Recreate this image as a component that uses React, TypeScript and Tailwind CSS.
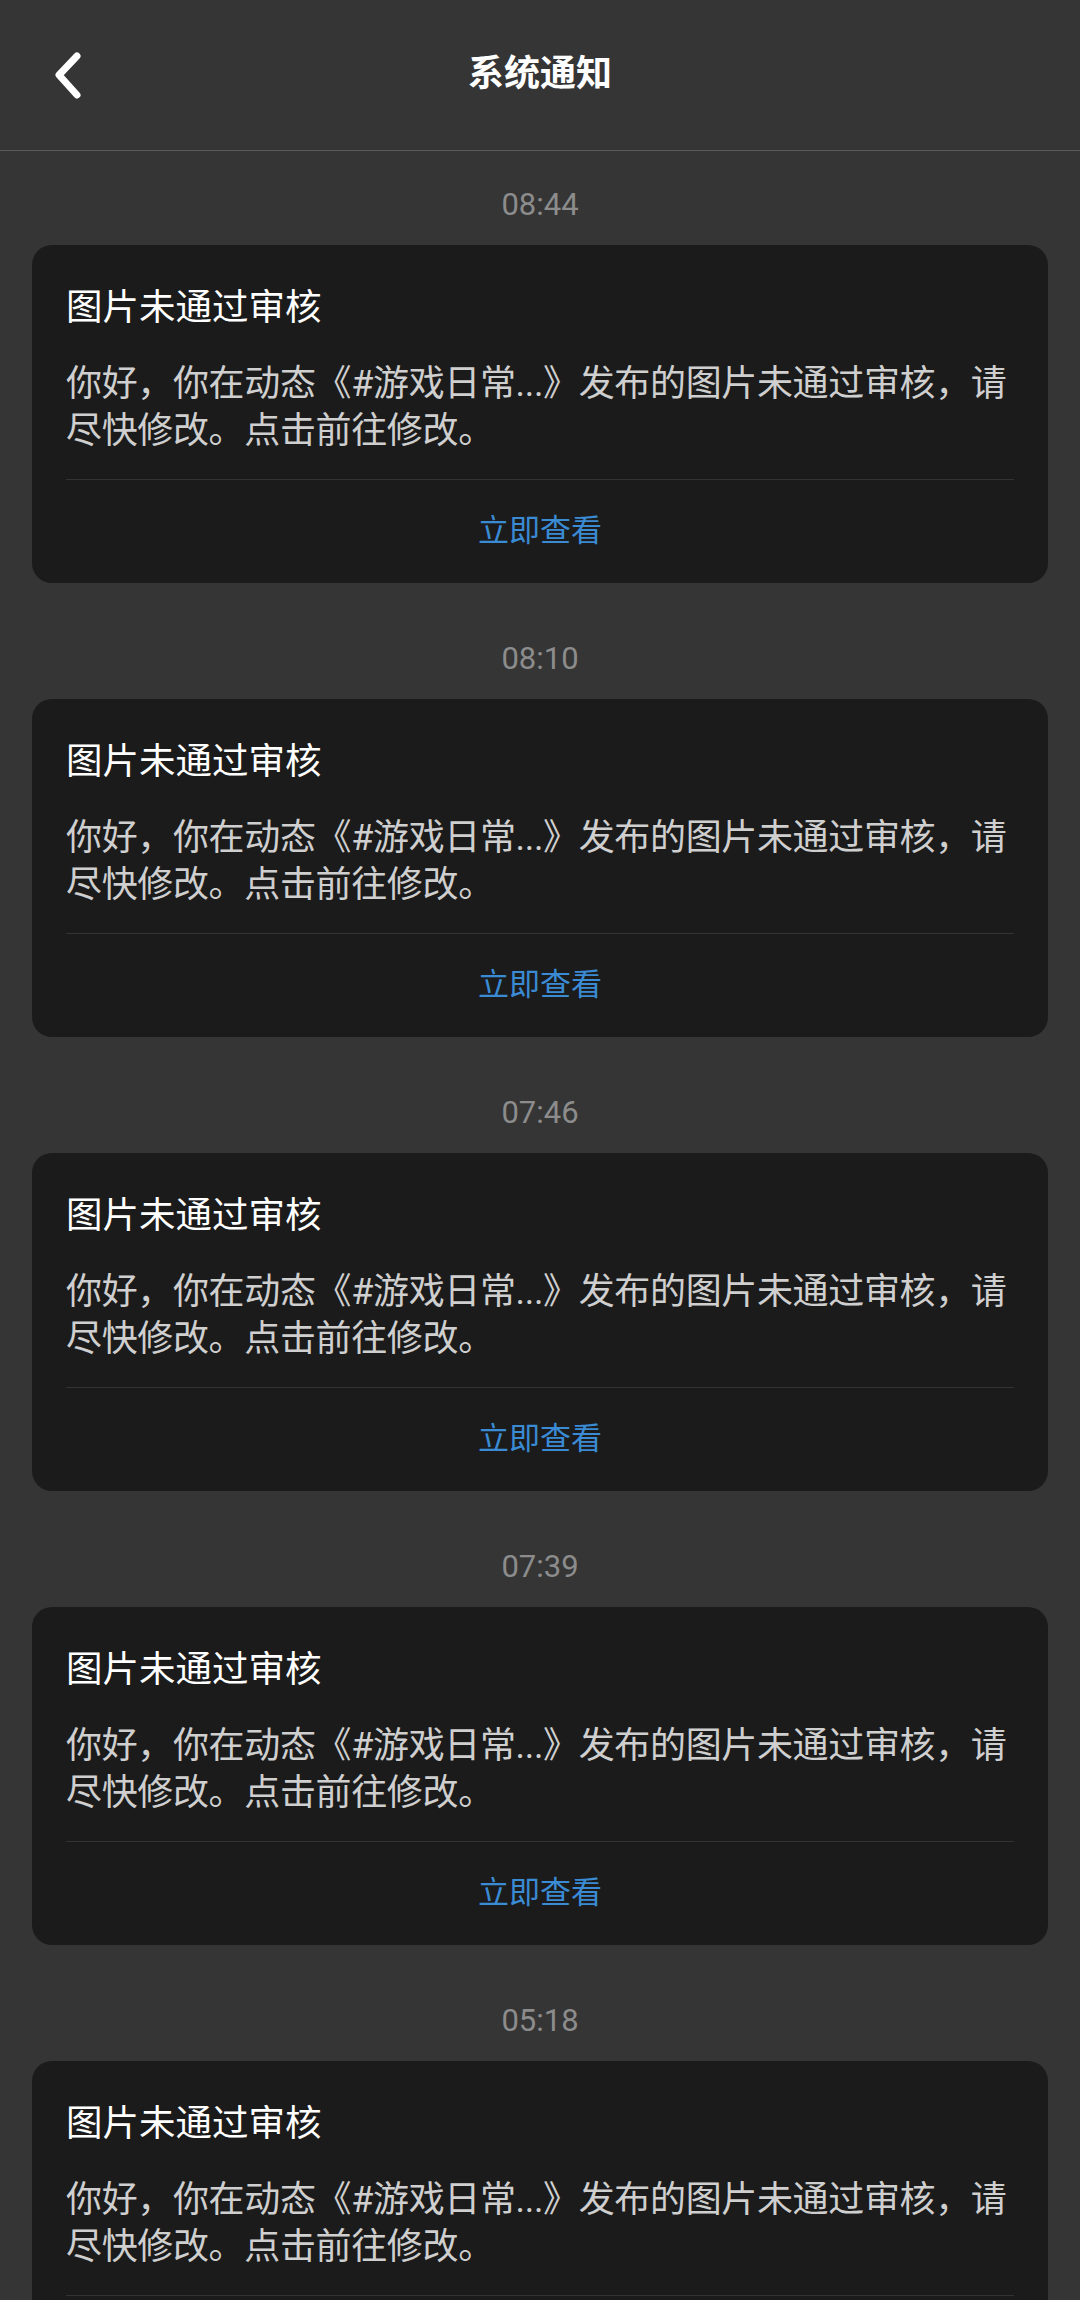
const notices = [
  { time: '08:44' },
  { time: '08:10' },
  { time: '07:46' },
  { time: '07:39' },
  { time: '05:18' },
];

const font = { fontFamily: 'Roboto, "Noto Sans CJK SC", sans-serif' };

function BackIcon() {
  return (
    <svg width="40" height="60" viewBox="0 0 40 60" fill="none">
      <path d="M29 16 L11 35 L29 55" stroke="white" strokeWidth="7" strokeLinecap="round" strokeLinejoin="round" />
    </svg>
  );
}

function NoticeCard({ time }: { time: string }) {
  return (
    <div className="flex flex-col">
      {/* time stamp */}
      <div className="text-center text-[31px] leading-[40px] text-[#8c8c8c] mb-[20px]">{time}</div>
      <div className="bg-[#1b1b1b] rounded-[20px] px-[34px] pt-[40px] h-[338px] overflow-hidden">
        <h3 className="text-[36.5px] leading-[46px] text-white font-normal">图片未通过审核</h3>
        <p className="mt-[30px] -mr-[26px] text-[36px] leading-[47px] tracking-[-0.35px] text-[#cfcfcf]">
          你好，你在动态《#游戏日常...》发布的图片未通过审核，请尽快修改。点击前往修改。
        </p>
        <div className="mt-[24px] h-px bg-[#333333]" />
        <div className="h-[102px] flex items-center justify-center text-[31px] text-[#3a8ad4]">立即查看</div>
      </div>
    </div>
  );
}

export default function App() {
  return (
    <div className="w-[1080px] h-[2300px] overflow-hidden bg-[#353535]" style={font}>
      {/* Header */}
      <div className="relative h-[151px] border-b border-[#5a5a5a] flex items-center justify-center">
        <div className="absolute left-[48px] top-[40px]">
          <BackIcon />
        </div>
        <h1 className="text-[36px] font-bold text-white -mt-[2px]">系统通知</h1>
      </div>

      <div className="flex flex-col gap-[56px] pt-[34px] px-[32px]">
        {notices.map((n) => (
          <NoticeCard key={n.time} time={n.time} />
        ))}
      </div>
    </div>
  );
}
